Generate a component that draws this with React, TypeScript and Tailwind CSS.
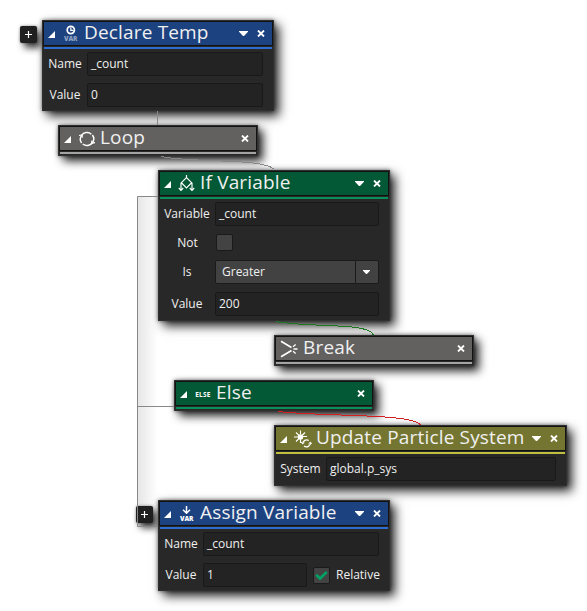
import type { ReactNode } from "react";

type Tone = "blue" | "gray" | "green" | "olive";

const toneHeader: Record<Tone, string> = {
  blue: "bg-[#1d4280]",
  gray: "bg-[#636160]",
  green: "bg-[#035835]",
  olive: "bg-[#747530]",
};
const toneStripe: Record<Tone, string> = {
  blue: "bg-[#2b6dd0]",
  gray: "bg-[#a3a3a3]",
  green: "bg-[#04915a]",
  olive: "bg-[#c0c040]",
};

function Collapse() {
  return (
    <svg width="7" height="7" viewBox="0 0 7 7" className="shrink-0">
      <path d="M7 0V7H0Z" fill="#fff" />
    </svg>
  );
}

function Close() {
  return (
    <svg width="8" height="7" viewBox="0 0 8 7" className="shrink-0">
      <path d="M1 .5L7 6.5M7 .5L1 6.5" stroke="#fff" strokeWidth="1.8" />
    </svg>
  );
}

function Caret({ small = false }: { small?: boolean }) {
  return (
    <svg width={small ? 7 : 9} height={small ? 4 : 5} viewBox="0 0 9 5" className="shrink-0">
      <path d="M0 0H9V.8L5 5H4L0 .8Z" fill="#fff" />
    </svg>
  );
}

function ClockVar() {
  return (
    <svg width="16" height="18" viewBox="0 0 16 18" fill="none">
      <circle cx="7.8" cy="5" r="3.6" stroke="#fff" strokeWidth="1.7" />
      <path d="M7.8 2.5V5.3H10.3" stroke="#fff" strokeWidth="1.2" />
      <text x="1" y="16" textLength="13.5" fill="#8ea1c0" className="font-['Open_Sans',sans-serif] text-[6.5px] font-extrabold tracking-normal">VAR</text>
    </svg>
  );
}

function AssignVar() {
  return (
    <svg width="16" height="18" viewBox="0 0 16 18" fill="none">
      <path d="M7.5 1V8M4 4.7L7.5 8.2L11 4.7" stroke="#fff" strokeWidth="1.5" />
      <text x="1" y="16" textLength="13.5" fill="#fff" className="font-['Open_Sans',sans-serif] text-[6.5px] font-extrabold tracking-normal">VAR</text>
    </svg>
  );
}

function LoopIcon() {
  return (
    <svg width="18" height="16" viewBox="0 0 18 16" fill="none" stroke="#fff" strokeWidth="1.5" className="-ml-px shrink-0">
      <path d="M3.6 12A6.4 6.4 0 0 1 3.5 4.6A6.4 6.4 0 0 1 13.3 3.2M14.4 4A6.4 6.4 0 0 1 14.5 11.5A6.4 6.4 0 0 1 4.8 13" />
      <path d="M1 4.5L4 4L4.4 6.6M13.6 9.6L14 12.2L17 11.7" strokeWidth="1.2" />
    </svg>
  );
}

function IfIcon() {
  return (
    <svg width="18" height="17" viewBox="0 0 18 17" fill="none" stroke="#fff" strokeWidth="1.2">
      <path d="M8.5 0V2.6M8.5 2.6L13.6 7.7L8.5 12.8L3.4 7.7ZM3 7.7V15.2M14 7.7V15.2" />
      <path d="M.8 13L3 15.3L5.2 13M11.8 13L14 15.3L16.2 13" />
    </svg>
  );
}

function BreakIcon() {
  return (
    <svg width="18" height="18" viewBox="0 0 18 18" fill="none" stroke="#fff">
      <path d="M1 1.2L11.5 7.4M1 16.8L11.5 10.6" strokeWidth="1.7" />
      <path d="M13 6.8L15.7 4.6M13.5 9H17.5M13 11.2L15.7 13.4" strokeWidth="1.3" />
    </svg>
  );
}

function ElseIcon() {
  return (
    <svg width="18" height="10" viewBox="0 0 18 10">
      <text x="1.3" y="7.5" fill="#fff" textLength="15" className="font-['Open_Sans',sans-serif] text-[6.5px] font-bold">ELSE</text>
    </svg>
  );
}

function ParticleIcon() {
  return (
    <svg width="18" height="18" viewBox="0 0 18 18" fill="none" stroke="#fff">
      <circle cx="6.5" cy="7" r="2.7" fill="#fff" stroke="none" />
      <path d="M6.5 .5V4M6.5 9V13M0 7H4M9 6.5H13M2 2.5L5 5.5M11 2.5L8 5.5M2 11.5L5 8.5" strokeWidth="1.1" />
      <path d="M8.6 13.8A4 4 0 0 1 14.8 10.5M16.4 12.5A4 4 0 0 1 10 16" strokeWidth="1.3" />
      <path d="M7 11.9L8.7 13.9L10.5 12.1M14.5 13.9L16.3 12.2L18 13.8" />
    </svg>
  );
}

interface NodeProps {
  title: string;
  tone: Tone;
  place: string;
  icon: ReactNode;
  expandable?: boolean;
  menu?: boolean;
  children?: ReactNode;
}

function Node({ title, tone, place, icon, expandable = true, menu = false, children }: NodeProps) {
  return (
    <section
      className={`absolute flex flex-col border border-[#303030] bg-[#282828] shadow-[0_0_4px_rgba(0,0,0,0.55),5px_5px_10px_rgba(0,0,0,0.85)] ${place}`}
    >
      <header className={`flex h-[25px] shrink-0 items-center border border-[#121212] pr-[7px] ${toneHeader[tone]}`}>
        {expandable && (
          <span className="ml-1 mt-px flex w-3.5">
            <Collapse />
          </span>
        )}
        <span className={`flex w-[18px] justify-center ${expandable ? "" : "ml-1"}`}>{icon}</span>
        <h2 className={`-mt-[3px] flex-1 whitespace-nowrap text-[19px] leading-[23px] tracking-[0.17px] ${expandable ? "ml-1" : "ml-[5px]"}`}>
          {title}
        </h2>
        <span className="flex items-center gap-[9px]">
          {menu && <Caret />}
          <Close />
        </span>
      </header>
      <div className={`mx-px mt-px h-0.5 shrink-0 ${toneStripe[tone]}`} />
      {children}
    </section>
  );
}

function Row({ label, className, labelWidth = "w-[42px]", children }: { label: string; className: string; labelWidth?: string; children: ReactNode }) {
  return (
    <div className={`ml-0.5 flex items-center ${className}`}>
      <label className={`pr-0.5 text-center ${labelWidth}`}>{label}</label>
      {children}
    </div>
  );
}

function Field({ value, width }: { value: string; width: string }) {
  return (
    <div className={`flex h-6 items-center rounded-[2px] border border-[#191919] bg-[#232323] pl-[3px] ${width}`}>{value}</div>
  );
}

function Check({ on = false }: { on?: boolean }) {
  return (
    <span className="flex size-[17px] items-center justify-center rounded-[2px] border border-[#1a1a1a] bg-[#434343]">
      {on && (
        <svg width="13" height="11" viewBox="0 0 13 11" fill="none">
          <path d="M1.2 4.8L5 8.5L11.8 2" stroke="#04a064" strokeWidth="2.7" />
        </svg>
      )}
    </span>
  );
}

function AddButton({ place }: { place: string }) {
  return (
    <button
      className={`absolute flex size-[17px] items-center justify-center rounded-[2px] bg-[#202020] shadow-[0_0_3px_rgba(0,0,0,0.4),4px_5px_7px_rgba(0,0,0,0.75)] ${place}`}
    >
      <svg width="7" height="7" viewBox="0 0 7 7">
        <path d="M3.5 0V7M0 3.5H7" stroke="#fff" strokeWidth="1.2" />
      </svg>
    </button>
  );
}

export default function App() {
  return (
    <main className="relative h-[611px] w-[587px] overflow-hidden bg-white font-['Open_Sans','Noto_Sans',sans-serif] text-[12px] leading-4 text-[#f0f0f0]">
      <div className="absolute left-[138px] top-[197px] h-[329px] w-5 bg-linear-to-r from-[#e6e6e6] to-transparent" />
      <AddButton place="left-5 top-[26px]" />
      <AddButton place="left-[136px] top-[506px]" />

      <Node title="Declare Temp" tone="blue" place="left-[42px] top-5 h-[91px] w-[232px]" icon={<ClockVar />} menu>
        <Row label="Name" className="mt-[3px]"><Field value="_count" width="w-44" /></Row>
        <Row label="Value" className="mt-[7px]"><Field value="0" width="w-44" /></Row>
      </Node>
      <Node title="Loop" tone="gray" place="left-[58px] top-[125px] h-[31px] w-[200px]" icon={<LoopIcon />} />
      <Node title="If Variable" tone="green" place="left-[158px] top-[170px] h-[151px] w-[232px]" icon={<IfIcon />} menu>
        <Row label="Variable" labelWidth="w-[54px]" className="mt-[3px]"><Field value="_count" width="w-[164px]" /></Row>
        <Row label="Not" labelWidth="w-[55px]" className="mt-2 h-[17px]"><Check /></Row>
        <Row label="Is" labelWidth="w-[54px]" className="mt-[9px]">
          <div className="flex h-6 w-[164px] items-stretch rounded-[2px] border border-[#1a1a1a] bg-[#424242]">
            <span className="flex flex-1 items-center pl-1.5">Greater</span>
            <span className="flex w-[23px] items-center justify-center border-l border-[#1a1a1a] pr-px"><Caret small /></span>
          </div>
        </Row>
        <Row label="Value" labelWidth="w-[54px]" className="mt-2"><Field value="200" width="w-[164px]" /></Row>
      </Node>
      <Node title="Break" tone="gray" place="left-[274px] top-[335px] h-[31px] w-[200px]" icon={<BreakIcon />} expandable={false} />
      <Node title="Else" tone="green" place="left-[174px] top-[380px] h-[31px] w-[200px]" icon={<ElseIcon />} />
      <Node title="Update Particle System" tone="olive" place="left-[274px] top-[425px] h-[61px] w-[293px]" icon={<ParticleIcon />} menu>
        <Row label="System" labelWidth="w-[49px]" className="mt-[3px]"><Field value="global.p_sys" width="w-[230px]" /></Row>
      </Node>
      <Node title="Assign Variable" tone="blue" place="left-[158px] top-[500px] h-[91px] w-[232px]" icon={<AssignVar />} menu>
        <Row label="Name" className="mt-[3px]"><Field value="_count" width="w-44" /></Row>
        <Row label="Value" className="mt-[7px]">
          <Field value="1" width="w-[104px]" />
          <span className="ml-1.5 flex items-center gap-1.5"><Check on />Relative</span>
        </Row>
      </Node>

      <svg width="587" height="611" className="pointer-events-none absolute inset-0" fill="none">
        <path d="M158 196.5H137.5V526.5H158M137.5 406.5H174M157.5 111V125" stroke="#888" />
        <g shapeRendering="crispEdges">
          <path d="M161 156.5C190 163 263 158 273.5 169" stroke="#888" />
          <path d="M276 321.5C310 328 368 322 373.5 335" stroke="#1e7822" />
          <path d="M278 411.5C325 417 412 413 420.5 425" stroke="#d21f1f" />
        </g>
      </svg>
    </main>
  );
}
